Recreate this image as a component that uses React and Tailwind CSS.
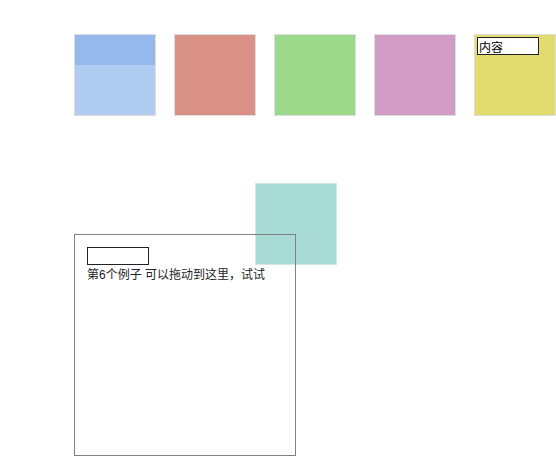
const boxes = [
  { id: 1, color: "bg-[#b0cdf1]" },
  { id: 2, color: "bg-[#d99185]" },
  { id: 3, color: "bg-[#9dd98a]" },
  { id: 4, color: "bg-[#d09bc5]" },
  { id: 5, color: "bg-[#e2dc6e]" },
];

const font = { fontFamily: '"Liberation Sans", "Noto Sans CJK SC", sans-serif' };

const App = () => {
  return (
    <div
      className="relative w-[556px] h-[465px] bg-white overflow-hidden text-[12px] text-[#222]"
      style={font}
    >
      <div className="flex gap-[18px] pl-[74px] pt-[34px]">
        {boxes.map((b) => (
          <div
            key={b.id}
            className={`w-[82px] h-[82px] border border-[#dedede] ${b.color}`}
          >
            {b.id == 1 && <div className="h-[30px] bg-[#95b9ec]"></div>}
            {b.id == 5 && (
              <input
                defaultValue="内容"
                className="block ml-[2px] mt-[2px] w-[62px] h-[18px] border border-[#222] bg-white px-[1px] text-[12px] leading-[16px] text-black outline-none"
              />
            )}
          </div>
        ))}
      </div>

      {/* dragged item */}
      <div className="absolute left-[255px] top-[183px] w-[82px] h-[82px] border border-[#d6e6e4] bg-[#a8dbd6]"></div>

      <div className="relative ml-[74px] mt-[118px] w-[222px] h-[222px] border border-[#808080] px-[12px] pt-[12px]">
        <input className="block w-[62px] h-[18px] border border-[#222] bg-white outline-none" />
        <div className="leading-[18px] mt-[1px] whitespace-nowrap">
          第6个例子 可以拖动到这里，试试
        </div>
      </div>
    </div>
  );
};

export default App;
